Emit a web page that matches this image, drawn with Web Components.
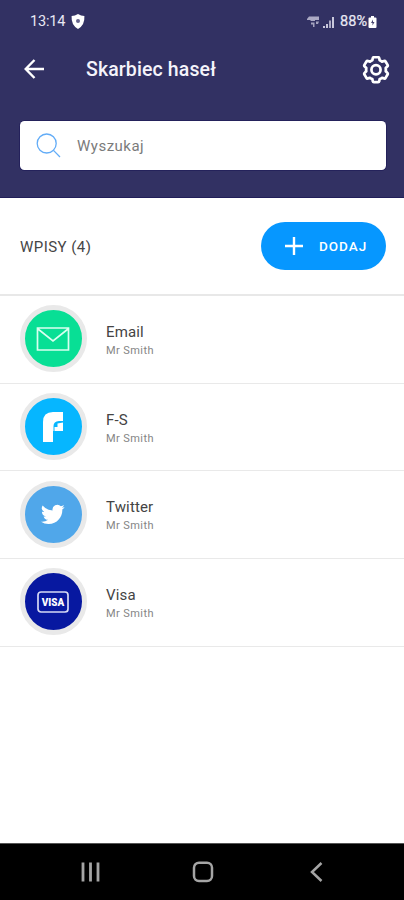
<!DOCTYPE html>
<html lang="pl">
<head>
<meta charset="utf-8">
<title>Skarbiec haseł</title>
<style>
body { margin: 0; background: #fff; font-family: Roboto, "Liberation Sans", sans-serif; }
</style>
</head>
<body>
<vault-screen></vault-screen>
<script>
const define = (name, html) => {
  const t = document.createElement('template');
  t.innerHTML = html;
  customElements.define(name, class extends HTMLElement {
    constructor() {
      super();
      this.attachShadow({ mode: 'open' }).append(t.content.cloneNode(true));
    }
  });
};

define('status-bar', `
<style>
:host { display: flex; height: 43px; box-sizing: border-box; padding: 0 27px 0 30px; align-items: center; color: #e9e8f4; font-size: 14.5px; }
span { line-height: 20px; letter-spacing: -.2px; }
.space { flex: 1; }
svg { display: block; flex: none; }
.shield { margin-left: 6px; }
.signal { margin-right: 5px; }
.pct { font-size: 14.5px; letter-spacing: 0; -webkit-text-stroke: .2px #e9e8f4; }
.bat { margin-left: 1px; }
</style>
<span>13:14</span>
<svg class="shield" width="14" height="15" viewBox="0 0 14 15"><path d="M7 0 Q10 2 13.400 2 Q14 11 7 15 Q0 11 .6 2 Q4 2 7 0Z" fill="#fff"/><circle cx="7" cy="7" r="2" fill="#65638c"/></svg>
<div class="space"></div>
<svg class="signal" width="28" height="14" viewBox="0 0 28 14" fill="#c9c8dc">
<path d="M0 4 L2 1.500 H12 V5 H8 V6 H4 L3 5H0Z" opacity=".8"/><path d="M4 7.500H7.500V12H6V9.500H4Z M9 6.500H12L11 9H9Z" opacity=".75"/>
<path d="M16 11h2v2h-2zM19 9h2v4h-2z"/><path d="M22 5.500h2V13h-2z" opacity=".8"/><path d="M25 2h2v11h-2z"/></svg>
<span class="pct">88%</span>
<svg class="bat" width="9" height="12" viewBox="0 0 9 12"><path d="M3 0h3v1.500h1.500q1 0 1 1V11q0 1-1 1h-6q-1 0-1-1V2.500q0-1 1-1H3Z" fill="#fff"/><path d="M5 3.500 3 7h1.500v2.500L6.500 6H5Z" fill="#45436f"/></svg>
`);

define('title-bar', `
<style>
:host { display: flex; align-items: center; height: 53px; padding: 0 14px 0 24px; box-sizing: border-box; color: #fff; }
svg { display: block; flex: none; }
.back { margin-bottom: 1px; }
h1 { flex: 1; margin: 1px 0 0 41px; font-size: 19.500px; line-height: 28px; font-weight: 500; letter-spacing: .12px; color: #f5f4fb; }
</style>
<svg class="back" width="21" height="20" viewBox="0 0 21 20" fill="none" stroke="#fff" stroke-width="2.400"><path d="M20 10H2M10.500 1 1.700 10l8.800 9"/></svg>
<h1><slot></slot></h1>
<svg width="28" height="28" viewBox=".2 .5 27.600 27.600" fill="none" stroke="#fff" stroke-width="2.700" stroke-linejoin="round"><path d="M12 1.700H16Q17 1.700 17.200 2.700L17.600 4.700Q18.800 5.200 19.900 6L21.900 5.400Q22.900 5.100 23.400 5.900L25.400 9.300Q25.900 10.200 25.100 10.900L23.600 12.400Q23.800 14 23.600 15.600L25.100 17.100Q25.900 17.800 25.400 18.700L23.400 22.100Q22.900 22.900 21.900 22.600L19.900 22Q18.800 22.800 17.600 23.300L17.200 25.300Q17 26.300 16 26.300H12Q11 26.300 10.800 25.300L10.400 23.300Q9.200 22.800 8.100 22L6.100 22.600Q5.100 22.900 4.600 22.100L2.600 18.700Q2.100 17.800 2.900 17.100L4.400 15.600Q4.200 14 4.400 12.400L2.900 10.900Q2.100 10.200 2.600 9.300L4.600 5.900Q5.100 5.100 6.100 5.400L8.100 6Q9.200 5.200 10.400 4.700L10.800 2.700Q11 1.700 12 1.700Z"/><circle cx="14" cy="14" r="4.500"/></svg>
`);

define('search-box', `
<style>
:host { display: flex; align-items: center; height: 49px; margin: 25px 18px 0 19.500px; padding-left: 16.500px; background: #fff; border-radius: 4.500px; box-shadow: 0 0 0 .8px #211e59; color: #7b7b7b; font-size: 15px; letter-spacing: .5px; }
svg { display: block; margin-right: 16px; }
</style>
<svg width="25" height="25" viewBox="0 0 25 25" fill="none" stroke="#62acf7" stroke-width="1.300"><circle cx="10.700" cy="10.500" r="9.500"/><path d="M17.500 17.400 24 24"/></svg>
<slot></slot>
`);

define('add-button', `
<style>
:host { display: flex; align-items: center; box-sizing: border-box; width: 125px; height: 48px; padding-left: 24px; border-radius: 24px; background: #0697ff; color: #fff; font-size: 13.500px; font-weight: 500; letter-spacing: 1px; }
svg { display: block; margin-right: 16px; }
</style>
<svg width="18" height="18" viewBox="0 0 18 18" stroke="#fff" stroke-width="2.400"><path d="M0 9h18M9 0v18"/></svg>
<slot></slot>
`);

define('list-heading', `
<style>
:host { display: flex; align-items: center; justify-content: space-between; height: 98px; box-sizing: border-box; padding: 0 18px 0 20px; border-bottom: 2px solid #e8e8e8; color: #464646; font-size: 15px; letter-spacing: .45px; }
span { padding-top: 1px; }
</style>
<span><slot></slot></span><add-button>DODAJ</add-button>
`);

define('vault-entry', `
<style>
:host { display: flex; align-items: center; height: 87.700px; box-sizing: border-box; padding-left: 20px; border-bottom: 1.700px solid #e9e9e9; }
.disc { box-sizing: border-box; width: 67px; height: 67px; border: 5px solid #e9e9e9; border-radius: 50%; background: var(--disc); display: flex; align-items: center; justify-content: center; margin: 0 19px 1px 0; flex: none; }
::slotted(svg) { margin-right: 1px; }
.name { font-size: 15px; line-height: 20px; color: #444; letter-spacing: .15px; }
.user { font-size: 11px; line-height: 14px; color: #858585; letter-spacing: .42px; margin-top: 2px; }
.text { padding-top: 1px; }
</style>
<div class="disc"><slot name="icon"></slot></div>
<div class="text"><div class="name"><slot></slot></div><div class="user"><slot name="user"></slot></div></div>
`);

define('nav-bar', `
<style>
:host { display: flex; align-items: center; justify-content: space-between; height: 57px; box-sizing: border-box; padding: 0 81px 0 80.500px; background: #000; border-top: 1px solid #555; }
svg { display: block; }
.home { margin-right: 3px; }
</style>
<svg width="19" height="20" viewBox="0 0 19 20" stroke="#a5a5a5" stroke-width="2.800"><path d="M2 .5v19M9.500 .5v19M17 .5v19"/></svg>
<svg class="home" width="22" height="22" viewBox="0 0 22 22" fill="none" stroke="#a5a5a5" stroke-width="2.500"><rect x="2" y="1.700" width="18" height="18.300" rx="5"/></svg>
<svg width="13" height="20" viewBox="0 0 13 20" fill="none" stroke="#a5a5a5" stroke-width="2.500"><path d="M11.500 1 2 10l9.500 9"/></svg>
`);

define('vault-screen', `
<style>
:host { display: flex; flex-direction: column; height: 900px; background: #fff; overflow: hidden; }
header { height: 198px; flex: none; box-sizing: border-box; background: #323163; border-bottom: 1.500px solid #211e59; }
main { flex: 1; }
svg { display: block; }
</style>
<header><status-bar></status-bar><title-bar>Skarbiec haseł</title-bar><search-box>Wyszukaj</search-box></header>
<main>
<list-heading>WPISY (4)</list-heading>
<vault-entry style="--disc:#08df95"><svg slot="icon" width="34" height="24" viewBox="0 0 34 24" fill="none" stroke="#d9fff0" stroke-width="1.700"><path d="M1.500 1h31v22h-31ZM2 2l15 12L32 2"/></svg>Email<span slot="user">Mr Smith</span></vault-entry>
<vault-entry style="--disc:#06b6ff"><svg slot="icon" width="22" height="30" viewBox="0 0 22 30"><path d="M1 30V10Q1 0 11 0H21V9H17Q11.500 9.500 11.500 14V19H11V30H1Z" fill="#fff"/><path d="M21 10.500V19H12.500V15H15.500V11.500Z" fill="#fff"/></svg>F-S<span slot="user">Mr Smith</span></vault-entry>
<vault-entry style="--disc:#50a7ea"><svg slot="icon" width="24" height="24" viewBox="0 0 24 24"><path d="M23.600 4.900a9.500 9.500 0 0 1-2.700.8 4.800 4.800 0 0 0 2.100-2.700 9.700 9.700 0 0 1-3.100 1.200 4.900 4.900 0 0 0-8.300 4.400A13.800 13.800 0 0 1 1.600 3.500a4.900 4.900 0 0 0 1.500 6.500 4.800 4.800 0 0 1-2.200-.6v.1a4.900 4.900 0 0 0 3.900 4.800 5 5 0 0 1-2.200.1 4.900 4.900 0 0 0 4.500 3.400A9.800 9.800 0 0 1 0 19.800a13.800 13.800 0 0 0 7.500 2.200c9.100 0 14.200-7.700 13.800-14.500a9.800 9.800 0 0 0 2.300-2.600Z" fill="#fff"/></svg>Twitter<span slot="user">Mr Smith</span></vault-entry>
<vault-entry style="--disc:#0718a0"><svg slot="icon" width="34" height="24" viewBox="0 0 34 24"><rect x="2" y="2" width="30" height="20" rx="3" fill="none" stroke="#d5d9f5" stroke-width="1.700"/><text x="17" y="15.800" text-anchor="middle" textLength="22.500" lengthAdjust="spacingAndGlyphs" font-family="Roboto, sans-serif" font-size="11" font-weight="900" fill="#fff">VISA</text></svg>Visa<span slot="user">Mr Smith</span></vault-entry>
</main>
<nav-bar></nav-bar>
`);
</script>
</body>
</html>
